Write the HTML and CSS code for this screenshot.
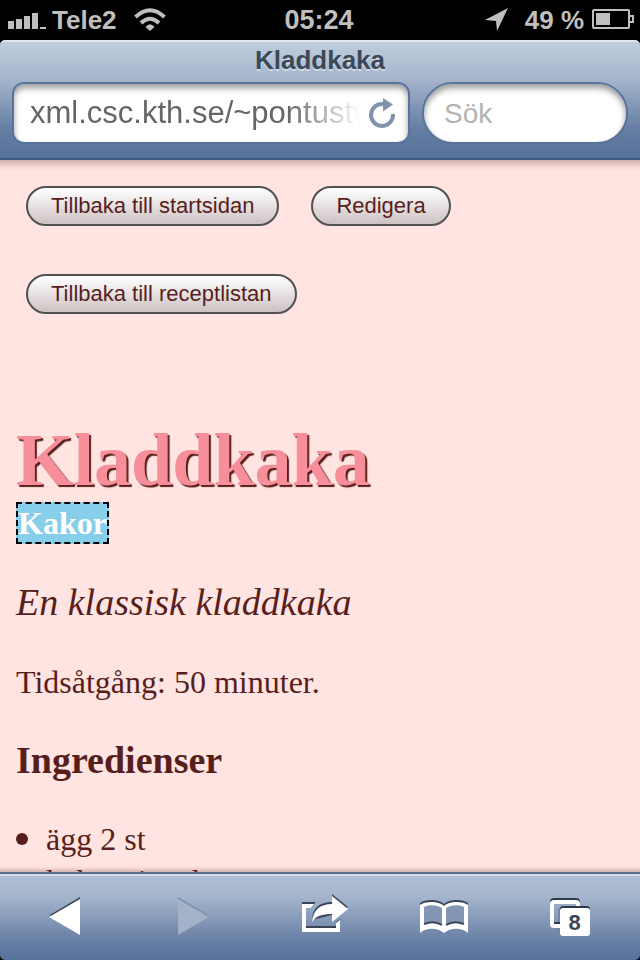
FILE: index.html
```html
<!DOCTYPE html>
<html lang="sv">
<head>
<meta charset="utf-8">
<meta name="viewport" content="width=device-width">
<title>Kladdkaka</title>
<link rel="stylesheet" href="styles.css">
</head>
<body>
<div class="status">
  <div class="status-left">
    <svg width="38" height="24" viewBox="8 8 38 24" aria-hidden="true"><path fill="#bfbfbf" d="M8 21h6v8H8zM16 19h6v10h-6zM24 16h6v13h-6zM32 13h6v16h-6zM40 27h6v2h-6z"/></svg>
    <span class="carrier">Tele2</span>
    <svg width="32" height="24" viewBox="134 8 32 24" aria-hidden="true"><g fill="none" stroke="#bfbfbf" stroke-width="4"><path d="M135.500 17Q150 3.500 164.500 17"/><path d="M141 23Q150 14.500 159 23"/></g><path fill="#bfbfbf" d="M145.500 27Q150 21.500 154.500 27L150 31z"/></svg>
  </div>
  <span class="clock">05:24</span>
  <div class="status-right">
    <svg width="24" height="24" viewBox="485 8 24 24" aria-hidden="true"><path fill="#bfbfbf" d="M508 8L485 20l11 1 1 10z"/></svg>
    <span class="percent">49 %</span>
    <svg width="42" height="24" viewBox="592 8 42 24" aria-hidden="true"><rect x="593" y="10" width="36" height="18" rx="1" fill="none" stroke="#bfbfbf" stroke-width="2"/><path fill="#bfbfbf" d="M596 13h14v12h-14z"/><path fill="none" stroke="#bfbfbf" stroke-width="2" d="M630 16h3v6h-3"/></svg>
  </div>
</div>
<header class="browser-bar">
  <div class="page-title">Kladdkaka</div>
  <div class="fields">
    <div class="address">
      <input class="address-input" type="text" aria-label="Adress" value="xml.csc.kth.se/~pontustv">
      <button class="reload" type="button" aria-label="Uppdatera">
        <svg width="28" height="32" viewBox="367 97 28 32" aria-hidden="true"><path fill="none" stroke="#8093ad" stroke-width="4" d="M382 104A11 11 0 1 0 392 114"/><path fill="#8093ad" d="M382 98l10 6.500-10 7z"/></svg>
      </button>
    </div>
    <input class="search" type="search" aria-label="Sök" placeholder="Sök">
  </div>
</header>
<main class="page">
  <div class="actions">
    <button class="pill" type="button">Tillbaka till startsidan</button>
    <button class="pill" type="button">Redigera</button>
    <button class="pill" type="button">Tillbaka till receptlistan</button>
  </div>
  <h1>Kladdkaka</h1>
  <div class="category">Kakor</div>
  <p class="summary">En klassisk kladdkaka</p>
  <p class="time">Tidsåtgång: 50 minuter.</p>
  <h2>Ingredienser</h2>
  <ul class="ingredients">
    <li>ägg 2 st</li>
    <li>kakao 4 msk</li>
  </ul>
</main>
<nav class="toolbar" aria-label="Verktygsfält">
  <button type="button" aria-label="Bakåt">
    <svg width="32" height="60" viewBox="48 887 32 60"><path fill="#3a4658" d="M49 915.500L80 897v20z"/><path fill="#fff" d="M49 917l31-18v36z"/></svg>
  </button>
  <button type="button" aria-label="Framåt">
    <svg width="32" height="60" viewBox="177 887 32 60"><path fill="#7d8fa9" d="M209 915.500L178 897v20z"/><path fill="#a3b2c8" d="M209 917l-31-18v36z"/></svg>
  </button>
  <button type="button" aria-label="Dela">
    <svg width="46" height="60" viewBox="302 887 46 60"><path fill="#3a4658" d="M302 902h14l-4 4h-10zM306 926h30v3h-30zM336 922l4-3v4h-4zM312 920c0-12 8-18 20-18v-8l16 13-16 8z"/><path fill="#fff" d="M302 904h12l-3.500 4H306v20h30v-5l4-3v12h-38zM312 922c1-12 8-18 20-18v-8l16 13-16 13v-8c-10 0-16 2-20 8z"/></svg>
  </button>
  <button type="button" aria-label="Bokmärken">
    <svg width="48" height="60" viewBox="420 887 48 60"><path fill="#3a4658" d="M420 903C425 899 439 899 444 904C449 899 463 899 468 903V910H420z"/><path fill="#3a4658" d="M424 923q10-4 18 2v3h-18zM446 925q8-6 18-2v5h-18z"/><path fill="#fff" d="M420 905C425 901 439 901 444 906C449 901 463 901 468 905V933C461 927 450 928 444 933C438 928 427 927 420 933z"/><path fill="#8397b5" d="M424 907C429 904 438 905 442 908V925Q434 920 424 923zM446 908C450 905 459 904 464 907V923Q454 920 446 925z"/><path fill="none" stroke="#3a4658" stroke-width="2" d="M424 924Q434 920 442 925M446 925Q454 920 464 924"/></svg>
  </button>
  <button type="button" aria-label="Flikar, 8 öppna">
    <svg width="44" height="60" viewBox="546 887 44 60"><rect x="552" y="900" width="26" height="24" rx="2" fill="none" stroke="#30394a" stroke-width="4"/><rect x="552" y="902" width="26" height="24" rx="2" fill="none" stroke="#fff" stroke-width="4"/><path fill="#7286a6" d="M558 908h22v14h-22zM558 928h22v4h-22z"/><rect x="560" y="906" width="30" height="28" rx="3" fill="#30394a"/><rect x="560" y="908" width="30" height="28" rx="3" fill="#fff"/><text class="tab-count" x="574.500" y="930" text-anchor="middle">8</text></svg>
  </button>
</nav>
</body>
</html>
```
FILE: styles.css
```css
* {
  box-sizing: border-box;
}

body {
  margin: 0;
  height: 100vh;
  display: flex;
  flex-direction: column;
  overflow: hidden;
  background: #000;
  font-family: "Liberation Sans", Arial, sans-serif;
}

button,
input {
  font-family: inherit;
  margin: 0;
}

svg {
  display: block;
  flex: none;
}

.status {
  flex: none;
  display: grid;
  grid-template-columns: 1fr auto 1fr;
  align-items: center;
  height: 40px;
  padding: 0 6px 0 8px;
  color: #bfbfbf;
  font-size: 26px;
  font-weight: bold;
  line-height: 40px;
}

.status-left,
.status-right {
  display: flex;
  align-items: center;
}

.status-right {
  justify-content: flex-end;
}

.carrier {
  margin: 0 17px 0 6px;
}

.clock {
  margin-right: 4px;
  font-size: 27px;
}

.percent {
  margin: 0 8px 0 16px;
}

.browser-bar {
  flex: none;
  height: 120px;
  padding: 0 12px;
  border-top: 2px solid #dfe6ee;
  border-bottom: 2px solid #3c5a87;
  border-radius: 5px 5px 0 0;
  background: linear-gradient(#c0cddd, #a5b5cc 32%, #657da3 75%, #56729b);
}

.page-title {
  height: 40px;
  color: #3b4858;
  font-size: 26px;
  font-weight: bold;
  line-height: 36px;
  text-align: center;
  text-shadow: 0 2px 0 #cdd7e4;
}

.fields {
  display: flex;
  gap: 12px;
}

.address,
.search {
  height: 62px;
  border: 2px solid #58739c;
  background: #fff;
  box-shadow: inset 0 4px 6px rgba(0, 0, 0, 0.4);
}

.address {
  flex: 1;
  min-width: 0;
  display: flex;
  align-items: center;
  gap: 8px;
  padding: 0 12px 0 16px;
  border-radius: 12px;
}

.address-input {
  flex: 1;
  min-width: 0;
  padding: 0;
  border: 0;
  outline: 0;
  background: none;
  color: #666;
  font-size: 31px;
  -webkit-mask-image: linear-gradient(to right, #000 78%, transparent);
  mask-image: linear-gradient(to right, #000 78%, transparent);
}

.reload {
  padding: 0;
  border: 0;
  background: none;
}

.search {
  flex: 0 0 206px;
  min-width: 0;
  padding: 2px 20px 0;
  border-radius: 31px;
  outline: 0;
  font-size: 28px;
  -webkit-appearance: none;
  appearance: none;
}

.search::placeholder {
  color: #b3b3b3;
  opacity: 1;
}

.page {
  flex: 1;
  min-height: 0;
  overflow: hidden;
  padding: 26px 16px 0;
  background: #ffe4e1;
  box-shadow: inset 0 10px 6px -6px rgba(80, 40, 40, 0.3), inset 0 -8px 4px -6px rgba(80, 40, 40, 0.3);
  color: #571f1c;
  font-family: "Liberation Serif", "Times New Roman", serif;
  font-size: 32px;
}

.actions {
  display: flex;
  flex-wrap: wrap;
  gap: 48px 32px;
  padding: 0 10px;
}

.pill {
  height: 40px;
  padding: 0 23px;
  border: 2px solid #515151;
  border-radius: 20px;
  background: linear-gradient(#fff, #cdc2c3);
  color: #571f1c;
  font-family: "Liberation Sans", Arial, sans-serif;
  font-size: 22px;
}

.page h1 {
  margin: 104px 0 0;
  color: #f78f9b;
  font-size: 74px;
  line-height: 84px;
  text-shadow: 2px 2px 1px #571f1c;
}

.category {
  width: fit-content;
  border: 2px dashed #000;
  background: #87ceeb;
  color: #fff;
  font-weight: bold;
  line-height: 38px;
}

.summary {
  margin: 36px 0 40px;
  font-size: 38px;
  font-style: italic;
  line-height: 44px;
}

.time {
  margin: 0;
  line-height: 36px;
}

.page h2 {
  margin: 38px 0 36px;
  font-size: 38px;
  line-height: 44px;
}

.ingredients {
  margin: 0;
  padding: 0;
  list-style: none;
  line-height: 42px;
}

.ingredients li {
  display: flex;
  align-items: center;
  gap: 18px;
}

.ingredients li::before {
  content: "";
  width: 12px;
  height: 12px;
  border-radius: 50%;
  background: #571f1c;
}

.toolbar {
  flex: none;
  display: grid;
  grid-template-columns: 128fr 130fr 134fr 104fr 144fr;
  align-items: center;
  justify-items: center;
  height: 88px;
  border-top: 2px solid #58708f;
  border-radius: 0 0 5px 5px;
  background: linear-gradient(#afbfd6, #a6b6cd 25%, #657da3 80%, #56729b);
  box-shadow: inset 0 2px 0 #d3dce8;
}

.toolbar button {
  padding: 0;
  border: 0;
  background: none;
}

.tab-count {
  fill: #3a4658;
  font-size: 22px;
  font-weight: bold;
}
```
